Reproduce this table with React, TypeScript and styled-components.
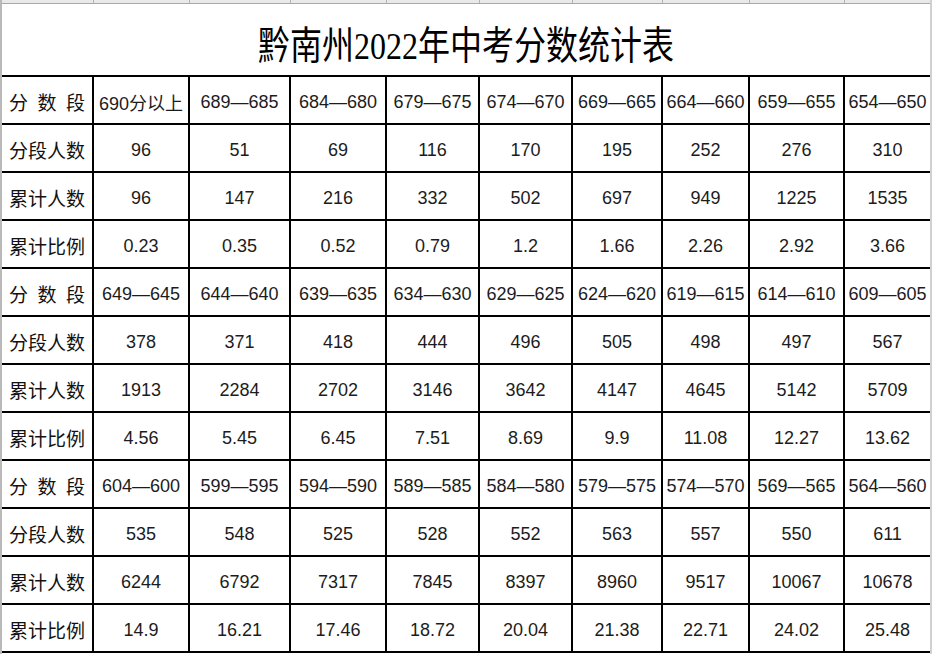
import React from "react";
import styled, { createGlobalStyle } from "styled-components";

const Global = createGlobalStyle`
  html, body { margin: 0; padding: 0; background: #ffffff; }
  body { width: 932px; height: 654px; overflow: hidden; }
`;

const COLS = "92px 96px 101px 96px 93px 93px 90px 87px 95px 85px";

const Sheet = styled.div`
  width: 932px;
  height: 654px;
  box-sizing: border-box;
  border-left: 2px solid #b9b9b9;
  border-right: 2px solid #d0d0d0;
  display: flex;
  flex-direction: column;
  overflow: hidden;
  background: #fff;
`;

const TopStrip = styled.div`
  display: grid;
  grid-template-columns: ${COLS};
  height: 4px;
  box-sizing: border-box;
  background: #e9e9e9;
  border-bottom: 1px solid #a9a9a9;
`;

const StripCell = styled.div<{ $last?: boolean }>`
  box-sizing: border-box;
  border-right: ${(p) => (p.$last ? "none" : "1px solid #b5b5b5")};
`;

const TitleRow = styled.div`
  height: 71px;
  display: flex;
  align-items: center;
  justify-content: center;
  padding-top: 12px;
  box-sizing: border-box;
`;

const TitleText = styled.h1`
  margin: 0;
  font-family: "Liberation Serif", "Noto Sans CJK SC", serif;
  font-weight: 400;
  font-size: 32px;
  line-height: 1;
  color: #000;
  transform: scaleY(1.2);
`;

const Table = styled.div`
  display: grid;
  grid-template-columns: ${COLS};
  grid-auto-rows: 48px;
  border-top: 2px solid #000;
`;

const Cell = styled.div<{ $last?: boolean }>`
  box-sizing: border-box;
  border-bottom: 2px solid #000;
  border-right: ${(p) => (p.$last ? "none" : "2px solid #000")};
  display: flex;
  align-items: center;
  justify-content: center;
  font-family: "Liberation Sans", "Noto Sans CJK SC", sans-serif;
  font-size: 18px;
  color: #1c1c1c;
  white-space: nowrap;
  overflow: hidden;
  padding-top: 4px;
`;

const LabelCell = styled.div`
  box-sizing: border-box;
  border-bottom: 2px solid #000;
  border-right: 2px solid #000;
  display: flex;
  align-items: center;
  padding: 2px 7px 0 7px;
  font-family: "Noto Sans CJK SC", sans-serif;
  font-size: 19px;
  font-weight: 400;
  color: #111;
`;

const LabelText = styled.span`
  display: block;
  width: 100%;
  text-align: justify;
  text-align-last: justify;
  white-space: nowrap;
`;

type Group = {
  ranges: string[];
  counts: string[];
  totals: string[];
  ratios: string[];
};

const groups: Group[] = [
  {
    ranges: ["690分以上", "689—685", "684—680", "679—675", "674—670", "669—665", "664—660", "659—655", "654—650"],
    counts: ["96", "51", "69", "116", "170", "195", "252", "276", "310"],
    totals: ["96", "147", "216", "332", "502", "697", "949", "1225", "1535"],
    ratios: ["0.23", "0.35", "0.52", "0.79", "1.2", "1.66", "2.26", "2.92", "3.66"],
  },
  {
    ranges: ["649—645", "644—640", "639—635", "634—630", "629—625", "624—620", "619—615", "614—610", "609—605"],
    counts: ["378", "371", "418", "444", "496", "505", "498", "497", "567"],
    totals: ["1913", "2284", "2702", "3146", "3642", "4147", "4645", "5142", "5709"],
    ratios: ["4.56", "5.45", "6.45", "7.51", "8.69", "9.9", "11.08", "12.27", "13.62"],
  },
  {
    ranges: ["604—600", "599—595", "594—590", "589—585", "584—580", "579—575", "574—570", "569—565", "564—560"],
    counts: ["535", "548", "525", "528", "552", "563", "557", "550", "611"],
    totals: ["6244", "6792", "7317", "7845", "8397", "8960", "9517", "10067", "10678"],
    ratios: ["14.9", "16.21", "17.46", "18.72", "20.04", "21.38", "22.71", "24.02", "25.48"],
  },
];

const Row: React.FC<{ label: React.ReactNode; values: string[] }> = ({ label, values }) => (
  <>
    <LabelCell>
      <LabelText>{label}</LabelText>
    </LabelCell>
    {values.map((v, i) => (
      <Cell key={i} $last={i === values.length - 1}>
        {v}
      </Cell>
    ))}
  </>
);

export default function App() {
  return (
    <>
      <Global />
      <Sheet>
        <TopStrip>
          {Array.from({ length: 10 }).map((_, i) => (
            <StripCell key={i} $last={i === 9} />
          ))}
        </TopStrip>
        <TitleRow>
          <TitleText>黔南州2022年中考分数统计表</TitleText>
        </TitleRow>
        <Table>
          {groups.map((g, gi) => (
            <React.Fragment key={gi}>
              <Row label="分 数 段" values={g.ranges} />
              <Row label="分段人数" values={g.counts} />
              <Row label="累计人数" values={g.totals} />
              <Row label="累计比例" values={g.ratios} />
            </React.Fragment>
          ))}
        </Table>
      </Sheet>
    </>
  );
}
